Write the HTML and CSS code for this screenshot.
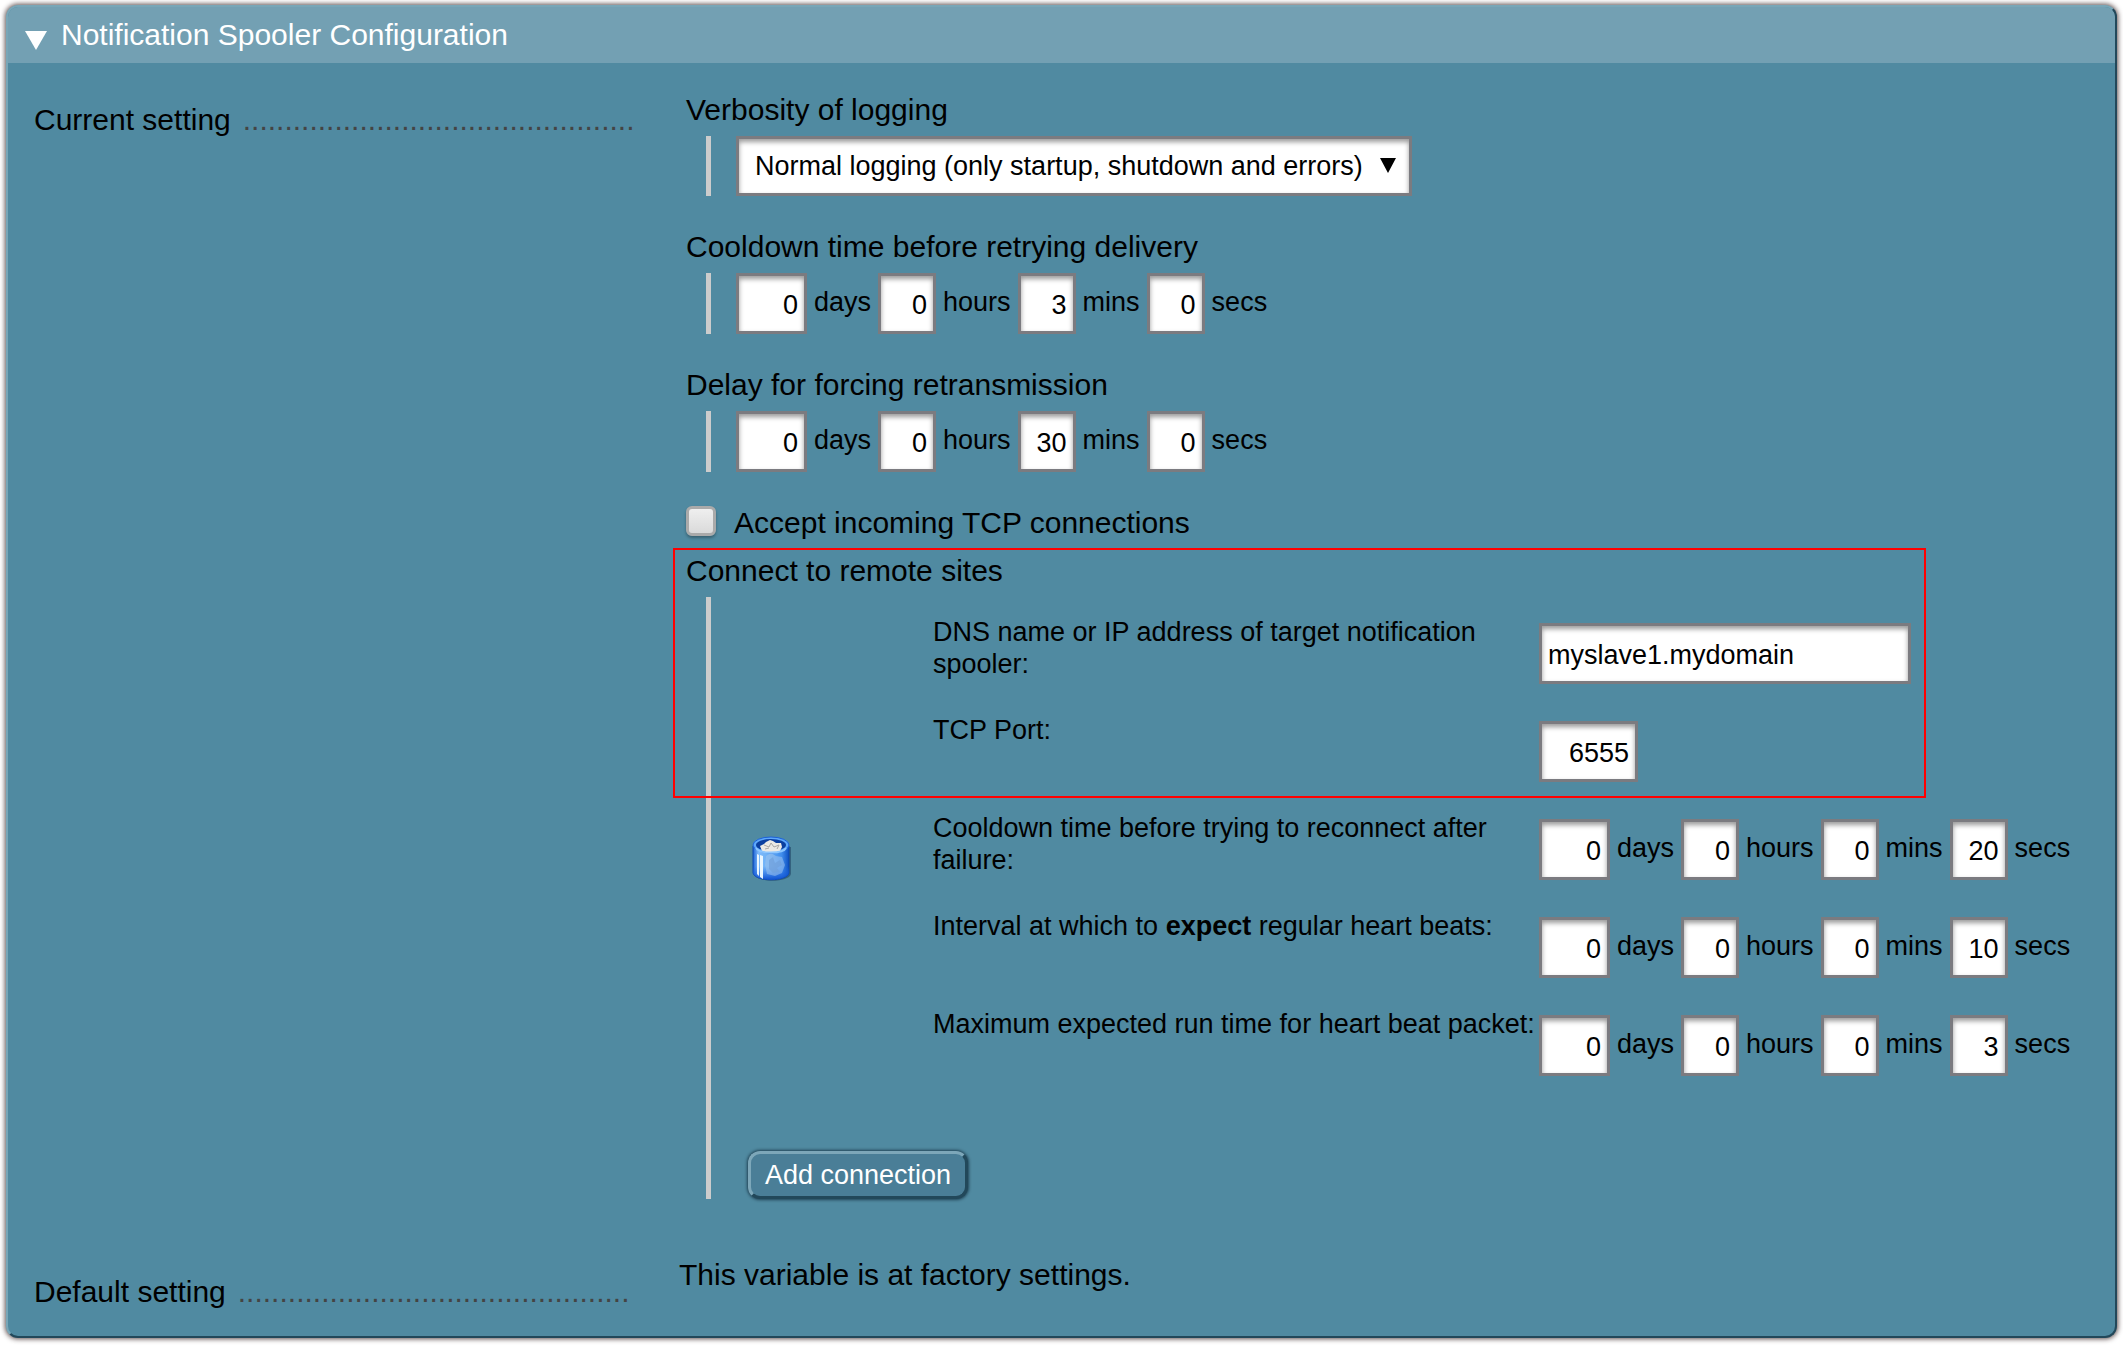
FILE: index.html
```html
<!DOCTYPE html>
<html lang="en">
<head>
<meta charset="utf-8">
<title>Notification Spooler Configuration</title>
<link rel="stylesheet" href="styles.css">
</head>
<body>
<main class="panel">
  <h1 class="panel-title">
    <svg class="fold" viewBox="0 0 22 19" aria-hidden="true"><path d="M0 0h22L11 19z" fill="#fff"/></svg>
    <span>Notification Spooler Configuration</span>
  </h1>
  <form class="settings">
    <div class="legend"><span>Current setting</span><span class="dots" aria-hidden="true">...............................................</span></div>
    <div class="content">
      <section class="group">
        <label class="caption" for="verbosity">Verbosity of logging</label>
        <div class="indent">
          <div class="dropdown">
            <select id="verbosity"><option>Normal logging (only startup, shutdown and errors)</option></select>
            <svg class="arrow" viewBox="0 0 16 15" aria-hidden="true"><path d="M0 0h16L8 15z"/></svg>
          </div>
        </div>
      </section>
      <section class="group">
        <h2 class="caption">Cooldown time before retrying delivery</h2>
        <div class="indent">
          <div class="age">
            <input class="days" id="a1" value="0"><label for="a1">days</label>
            <input id="a2" value="0"><label for="a2">hours</label>
            <input id="a3" value="3"><label for="a3">mins</label>
            <input id="a4" value="0"><label for="a4">secs</label>
          </div>
        </div>
      </section>
      <section class="group">
        <h2 class="caption">Delay for forcing retransmission</h2>
        <div class="indent">
          <div class="age">
            <input class="days" id="b1" value="0"><label for="b1">days</label>
            <input id="b2" value="0"><label for="b2">hours</label>
            <input id="b3" value="30"><label for="b3">mins</label>
            <input id="b4" value="0"><label for="b4">secs</label>
          </div>
        </div>
      </section>
      <div class="check">
        <input type="checkbox" id="accept"><label class="caption" for="accept">Accept incoming TCP connections</label>
      </div>
      <section class="remote">
        <div class="highlight"></div>
        <h2 class="caption">Connect to remote sites</h2>
        <div class="indent remote-body">
          <div class="connection">
            <button type="button" class="trash" aria-label="Delete connection">
              <svg viewBox="0 0 40 46" aria-hidden="true">
                <defs>
                  <linearGradient id="can" x1="0" x2="1" y1="0" y2="0"><stop offset="0" stop-color="#1c62d4"/><stop offset=".15" stop-color="#7db9fa"/><stop offset=".45" stop-color="#6bb0f5"/><stop offset=".8" stop-color="#3f8cec"/><stop offset="1" stop-color="#0c4fc0"/></linearGradient>
                  <linearGradient id="base" x1="0" x2="0" y1="0" y2="1"><stop offset=".6" stop-color="#1f6be6" stop-opacity="0"/><stop offset="1" stop-color="#0f50d0"/></linearGradient>
                </defs>
                <path d="M2 11v27c2 9 35 9 37 0V11z" fill="#173a5c" opacity=".5"/>
                <path d="M1 10v27c2 9 34 9 36 0V10z" fill="url(#can)" stroke="#0c48ae"/>
                <path d="M1 10v27c2 9 34 9 36 0V10z" fill="url(#base)"/>
                <path d="M14 20l5-3 5 3 6 1 3 8-3 8-7 3-8-2-2-9z" fill="#9fc3ec" opacity=".55"/>
                <path d="M17 24l4-3 2 6 5-3 2 5-5 3 3 4-7 1-4-4z" fill="#6f9fdc" opacity=".7"/>
                <path d="M5 18l2 1v21l-2-2zM8 19l3 1v23l-3-2z" fill="#e8f5ff"/>
                <ellipse cx="19" cy="9" rx="18" ry="8" fill="#5ea8fb" stroke="#1c62d8"/>
                <ellipse cx="19" cy="9" rx="15" ry="6" fill="#0b3f9f"/>
                <path d="M8 10l4-2 2-2 4-2 3 1 3 2 5 0 1 4-2 4c-6 2-12 2-18 0z" fill="#ece9e4"/>
                <path d="M12 9l5 2 2-4 3 4 5-2-2 4M13 13l4-1" fill="none" stroke="#aaa7a4"/>
                <path d="M4 12c3 6 27 6 30 0" fill="none" stroke="#8cc6ff" stroke-width="2"/>
              </svg>
            </button>
            <div class="fields">
              <label for="host">DNS name or IP address of target notification spooler:</label>
              <input class="host" id="host" value="myslave1.mydomain">
              <label for="port">TCP Port:</label>
              <input class="port" id="port" value="6555">
              <div>Cooldown time before trying to reconnect after failure:</div>
              <div class="age">
                <input class="days" id="c1" value="0"><label for="c1">days</label>
                <input id="c2" value="0"><label for="c2">hours</label>
                <input id="c3" value="0"><label for="c3">mins</label>
                <input id="c4" value="20"><label for="c4">secs</label>
              </div>
              <div>Interval at which to <b>expect</b> regular heart beats:</div>
              <div class="age">
                <input class="days" id="d1" value="0"><label for="d1">days</label>
                <input id="d2" value="0"><label for="d2">hours</label>
                <input id="d3" value="0"><label for="d3">mins</label>
                <input id="d4" value="10"><label for="d4">secs</label>
              </div>
              <div>Maximum expected run time for heart beat packet:</div>
              <div class="age">
                <input class="days" id="e1" value="0"><label for="e1">days</label>
                <input id="e2" value="0"><label for="e2">hours</label>
                <input id="e3" value="0"><label for="e3">mins</label>
                <input id="e4" value="3"><label for="e4">secs</label>
              </div>
            </div>
          </div>
          <button type="button" class="add">Add connection</button>
        </div>
      </section>
    </div>
    <div class="legend"><span>Default setting</span><span class="dots" aria-hidden="true">...............................................</span></div>
    <p class="factory">This variable is at factory settings.</p>
  </form>
</main>
</body>
</html>
```
FILE: styles.css
```css
* { box-sizing: border-box; }

body {
  margin: 0;
  padding: 5px 6px 7px;
  background: #fff;
  color: #000;
  font: 30px/34px "Liberation Sans", Arial, sans-serif;
}

.panel {
  border: 2px solid;
  border-color: #78a6b7 #22485a #22485a #78a6b7;
  border-radius: 12px;
  background: #508aa1;
  box-shadow: 0 0 5px 1px rgba(40, 20, 20, .75);
}

.panel-title {
  display: flex;
  align-items: center;
  gap: 14px;
  height: 56px;
  margin: 0;
  padding: 0 17px;
  border-radius: 10px 10px 0 0;
  background: #73a0b3;
  color: #fff;
  font-size: 30px;
  font-weight: normal;
}

.fold {
  width: 22px;
  height: 19px;
  margin-top: 10px;
}

.settings {
  display: grid;
  grid-template-columns: 600px 1fr;
  column-gap: 45px;
  padding: 30px 25px 27px 26px;
}

.legend {
  display: flex;
  align-self: start;
  gap: 12px;
  margin-top: 10px;
  white-space: nowrap;
}

.dots {
  flex: 1;
  min-width: 0;
  overflow: hidden;
  color: #444;
}

.content { padding-left: 7px; }

.caption {
  display: block;
  margin: 0;
  font-size: 30px;
  font-weight: normal;
}

.group { margin-bottom: 34px; }

.indent {
  margin: 9px 0 0 20px;
  padding-left: 25px;
  border-left: 5px solid #ccc;
}

input, select, button {
  margin: 0;
  font: 27px/32px "Liberation Sans", Arial, sans-serif;
  color: #000;
}

input:not([type="checkbox"]), select {
  height: 61px;
  border: 3px solid #7b7b80;
  border-radius: 0;
  background: #fff;
  box-shadow: inset 0 3px 5px rgba(0, 0, 0, .4);
}

input:not([type="checkbox"]) { padding: 4px 6px 0; }

.dropdown {
  position: relative;
  width: 676px;
}

.dropdown select {
  display: block;
  width: 100%;
  height: 60px;
  padding: 0 40px 0 16px;
  appearance: none;
}

.arrow {
  position: absolute;
  top: 22px;
  right: 16px;
  width: 16px;
  height: 15px;
  pointer-events: none;
}

.age {
  display: flex;
  align-items: center;
  font-size: 27px;
  line-height: 32px;
}

.age input {
  width: 58px;
  text-align: right;
}

.age .days { width: 71px; }

.age label { margin: 0 7px 4px; }

.check {
  display: flex;
  align-items: flex-start;
  gap: 18px;
  margin-bottom: 14px;
}

.check input {
  width: 30px;
  height: 30px;
  border: 3px solid #aaa;
  border-radius: 6px;
  background: linear-gradient(#efefef, #dadada);
  box-shadow: 0 2px 3px rgba(0, 0, 0, .3);
  appearance: none;
}

.remote { position: relative; }

.highlight {
  position: absolute;
  top: -6px;
  left: -13px;
  width: 1253px;
  height: 250px;
  border: 2px solid #f00;
  pointer-events: none;
}

.remote-body { padding-top: 26px; }

.connection {
  display: grid;
  grid-template-columns: 182px 1fr;
  column-gap: 15px;
}

.trash {
  align-self: center;
  width: 72px;
  padding: 18px 0 0 16px;
  border: 0;
  background: none;
}

.trash svg {
  display: block;
  width: 40px;
  height: 46px;
}

.fields {
  display: grid;
  grid-template-columns: 606px 1fr;
  row-gap: 37px;
  font-size: 27px;
  line-height: 32px;
}

.fields > :nth-child(odd) {
  height: 61px;
  margin-top: -7px;
}

.host { width: 372px; }

.port {
  width: 99px;
  text-align: right;
}

.add {
  display: block;
  height: 48px;
  margin: 75px 0 0 12px;
  padding: 0 14px;
  border: 3px solid;
  border-color: #7da7b9 #22485a #22485a #7da7b9;
  border-radius: 12px;
  background: #4a7e97;
  box-shadow: 0 0 3px 1px rgba(0, 20, 35, .6);
  color: #fff;
}

.settings > .content ~ .legend { margin-top: 76px; }

.factory { margin: 59px 0 0; }
```
